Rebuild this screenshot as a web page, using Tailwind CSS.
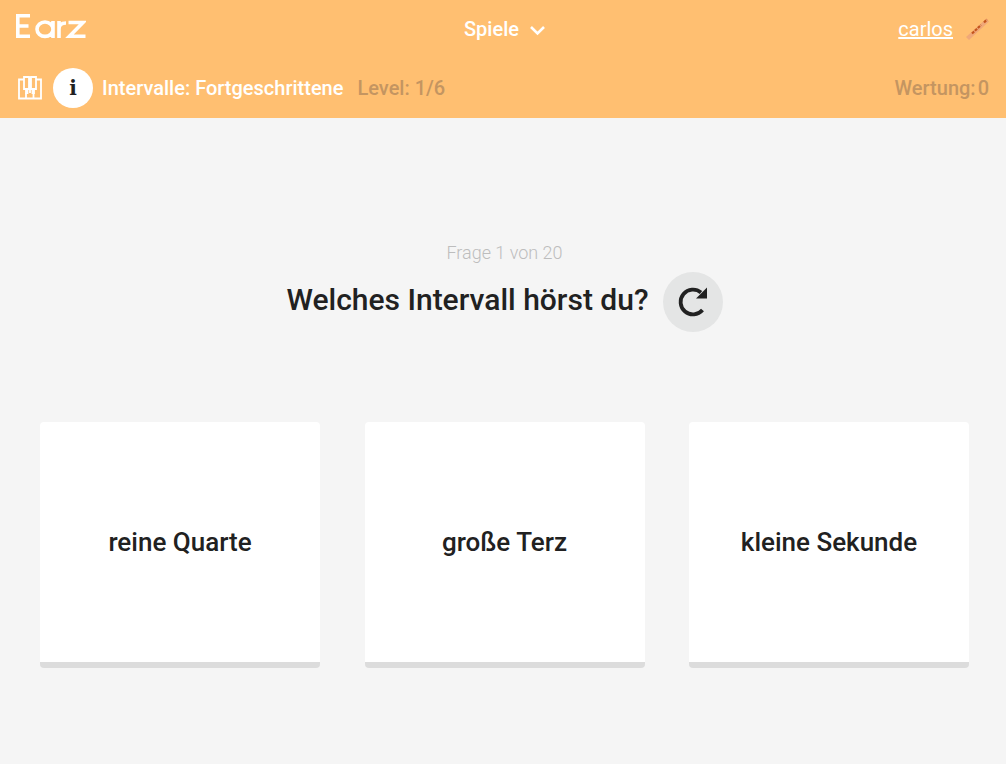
<!doctype html>
<html lang="de">
<head>
<meta charset="utf-8">
<script src="https://cdn.jsdelivr.net/npm/@tailwindcss/browser@4"></script>
</head>
<body class="m-0 bg-[#f5f5f5] font-['Roboto',sans-serif] antialiased">
<div class="w-[1006px] h-[764px] overflow-hidden flex flex-col">
  <header class="h-[118px] bg-[#ffbf71] flex flex-col shrink-0">
    <div class="h-[58px] grid grid-cols-[1fr_auto_1fr] items-center pl-[16px] pr-[16px]">
      <div class="flex items-center">
        <svg width="70" height="26" viewBox="0 0 70 26" fill="none" stroke="#fff" stroke-width="3.6" class="mb-[4px]">
          <path d="M14 1.800H1.800V22.200H14M1.800 12H12.500"/>
          <path d="M37 7V24M37 15.200a8 7.200 0 1 1-16 0a8 7.200 0 1 1 16 0"/>
          <path d="M43 24V7M43 15c0-4 2.500-6 7-6"/>
          <path d="M52.500 8.500H67L53.500 22.200H69.500"/>
        </svg>
      </div>
      <div class="flex items-center gap-[10px] pl-[4px] text-white text-[20px] font-medium">
        <span>Spiele</span>
        <svg width="17" height="11" viewBox="0 0 17 11" fill="none" stroke="#fff" stroke-width="2.600" class="mt-[2px]"><path d="M2 2l6.500 6.500L15 2"/></svg>
      </div>
      <div class="flex items-center justify-end gap-[12px]">
        <span class="text-white text-[20px] underline">carlos</span>
        <svg width="25" height="25" viewBox="0 0 25 25"><path d="M1 20l3 3L24 4.500 21.500 1.500z" fill="#f0a878"/><path d="M7 16.500l9-8.500M19 5.500l3-3" stroke="#c4551c" stroke-width="2.200" stroke-dasharray="3 1"/></svg>
      </div>
    </div>
    <div class="h-[60px] flex items-center pl-[18px] pr-[17px]">
      <svg width="24" height="24" viewBox="0 0 24 24" fill="none" stroke="#fff" stroke-width="1.800" class="mr-[11px]">
        <path d="M6 3.500H1V22.500H23V3.500H18"/>
        <path d="M6 1H11V13H9.500V17H8V13H6zM13 1H18V13H16V17H14.500V13H13z"/>
        <path d="M8 17V22.500M15.500 17V22.500M12 1V17"/>
      </svg>
      <div class="w-[40px] h-[40px] rounded-full bg-white flex items-center justify-center font-['DejaVu_Serif',serif] font-bold text-[20px] text-[#212121] mr-[9px]">i</div>
      <span class="text-white text-[20px] font-medium">Intervalle: Fortgeschrittene</span>
      <span class="text-[20px] font-medium text-[#c49561] ml-[14px]">Level: 1/6</span>
      <span class="ml-auto flex gap-[2px] text-[20px] font-medium text-[#c49561]"><span>Wertung:</span><span>0</span></span>
    </div>
  </header>
  <main class="flex-1 flex flex-col items-center">
    <p class="mt-[124px] pl-[3px] text-[18px] leading-[22px] font-light text-[#bdbdbd]">Frage 1 von 20</p>
    <div class="mt-[8px] ml-[3px] flex items-center gap-[14px]">
      <h1 class="text-[30px] leading-[38px] pb-[4px] font-medium text-[#212121]">Welches Intervall hörst du?</h1>
      <div class="w-[60px] h-[60px] rounded-full bg-[#e4e5e5] flex items-center justify-center">
        <svg width="30" height="30" viewBox="0 0 30 30" fill="none"><path d="M24.500 23A12.400 12.400 0 1 1 23 5.500" stroke="#212121" stroke-width="3.800"/><path d="M29 0.500V11.500H18z" fill="#212121"/></svg>
      </div>
    </div>
    <div class="mt-[90px] w-full pl-[40px] pr-[37px] flex justify-between">
      <div class="w-[280px] h-[246px] bg-white rounded-[4px] border-b-[6px] border-[#dcdcdc] flex items-center justify-center text-[26px] font-medium text-[#212121]">reine Quarte</div>
      <div class="w-[280px] h-[246px] bg-white rounded-[4px] border-b-[6px] border-[#dcdcdc] flex items-center justify-center text-[26px] font-medium text-[#212121]">große Terz</div>
      <div class="w-[280px] h-[246px] bg-white rounded-[4px] border-b-[6px] border-[#dcdcdc] flex items-center justify-center text-[26px] font-medium text-[#212121]">kleine Sekunde</div>
    </div>
  </main>
</div>
</body>
</html>
